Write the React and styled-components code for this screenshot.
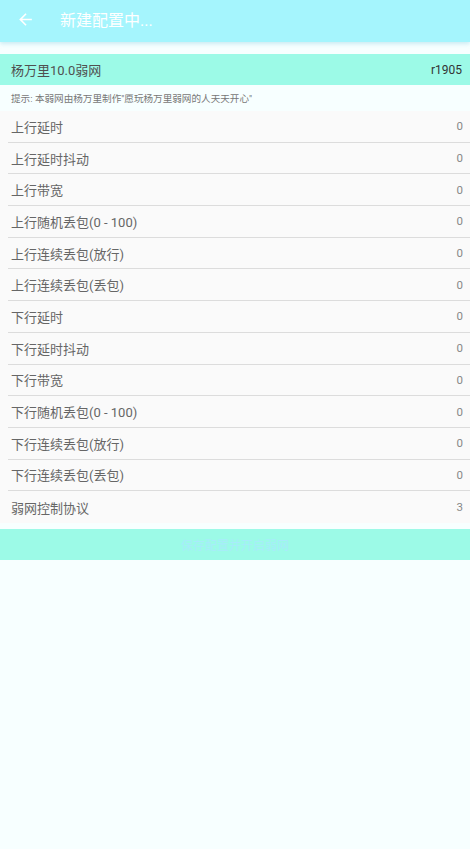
import styled, { createGlobalStyle } from 'styled-components';

const GlobalStyle = createGlobalStyle`
  html, body {
    margin: 0;
    padding: 0;
    background: #f7ffff;
    font-family: Roboto, "Noto Sans CJK SC", sans-serif;
  }
`;

const rows = [
  ['上行延时', 0],
  ['上行延时抖动', 0],
  ['上行带宽', 0],
  ['上行随机丢包(0 - 100)', 0],
  ['上行连续丢包(放行)', 0],
  ['上行连续丢包(丢包)', 0],
  ['下行延时', 0],
  ['下行延时抖动', 0],
  ['下行带宽', 0],
  ['下行随机丢包(0 - 100)', 0],
  ['下行连续丢包(放行)', 0],
  ['下行连续丢包(丢包)', 0],
  ['弱网控制协议', 3],
];

const App = () => {
  return (
    <Page>
      <GlobalStyle />
      <Toolbar>
        <BackIcon viewBox="0 0 24 24">
          <path d="M20 11H7.83l5.59-5.59L12 4l-8 8 8 8 1.41-1.41L7.83 13H20v-2z" fill="#fff" />
        </BackIcon>
        <Title>新建配置中...</Title>
      </Toolbar>
      <Content>
        <NameBar>
          <span className="name">杨万里10.0弱网</span>
          <span className="ver">r1905</span>
        </NameBar>
        <Hint>提示: 本弱网由杨万里制作"愿玩杨万里弱网的人天天开心"</Hint>
        <List>
          {rows.map(([label, value], i) => (
            <Row key={label} last={i === rows.length - 1}>
              <Label>{label}</Label>
              <Value>{value}</Value>
            </Row>
          ))}
        </List>
        <SaveButton>保存配置并开启弱网</SaveButton>
      </Content>
    </Page>
  );
};

export default App;

const Page = styled.div`
  min-height: 849px;
  background: #f7ffff;
`;

const Toolbar = styled.div`
  height: 42px;
  background: #a5f5fd;
  display: flex;
  align-items: center;
  padding-left: 16px;
  box-shadow: 0 2px 4px rgba(120, 200, 220, 0.35);
`;

const BackIcon = styled.svg`
  width: 19px;
  height: 19px;
  margin-top: -4px;
`;

const Title = styled.div`
  color: #fff;
  font-size: 16px;
  margin-left: 25px;
  margin-top: -4px;
`;

const Content = styled.div`
  padding-top: 12px;
`;

const NameBar = styled.div`
  height: 31px;
  background: #9cfae7;
  display: flex;
  align-items: center;
  justify-content: space-between;
  padding: 0 8px 0 11px;
  .name {
    font-size: 13px;
    color: #505050;
  }
  .ver {
    font-size: 12px;
    color: #333;
  }
`;

const Hint = styled.div`
  height: 26px;
  display: flex;
  align-items: center;
  padding-left: 11px;
  font-size: 9.6px;
  color: #777;
`;

const List = styled.div`
  background: #fafafa;
`;

const Row = styled.div`
  height: 31.7px;
  box-sizing: border-box;
  margin-left: 8px;
  padding: 0 7px 0 3px;
  display: flex;
  align-items: center;
  justify-content: space-between;
  border-bottom: ${(p) => (p.last ? 'none' : '1px solid #dcdcdc')};
`;

const Label = styled.span`
  font-size: 13px;
  color: #666;
`;

const Value = styled.span`
  font-size: 11.5px;
  color: #888;
`;

const SaveButton = styled.div`
  margin-top: 6px;
  height: 31px;
  background: #9cfae7;
  display: flex;
  align-items: center;
  justify-content: center;
  font-size: 12px;
  color: #a8ecfa;
`;
